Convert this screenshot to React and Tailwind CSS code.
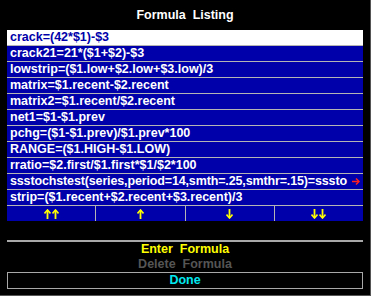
const formulas = [
  "crack=(42*$1)-$3",
  "crack21=21*($1+$2)-$3",
  "lowstrip=($1.low+$2.low+$3.low)/3",
  "matrix=$1.recent-$2.recent",
  "matrix2=$1.recent/$2.recent",
  "net1=$1-$1.prev",
  "pchg=($1-$1.prev)/$1.prev*100",
  "RANGE=($1.HIGH-$1.LOW)",
  "rratio=$2.first/$1.first*$1/$2*100",
  "ssstochstest(series,period=14,smth=.25,smthr=.15)=sssto",
  "strip=($1.recent+$2.recent+$3.recent)/3",
];

// one arrow glyph, pointing up or down
function Arrow({ down }) {
  return (
    <svg width="7" height="10" viewBox="0 0 7 10" className={down ? "rotate-180" : ""}>
      <path d="M0.5 4.5 L3.5 1 L6.5 4.5" fill="none" stroke="#ffff00" strokeWidth="1.6" />
      <line x1="3.5" y1="1.2" x2="3.5" y2="10" stroke="#ffff00" strokeWidth="1.8" />
    </svg>
  );
}

const moves = [
  { n: 2, down: false },
  { n: 1, down: false },
  { n: 1, down: true },
  { n: 2, down: true },
];

export default function App() {
  return (
    <div
      className="w-[371px] h-[296px] bg-black border-r border-b border-[#555555] flex flex-col font-bold text-[12.5px]"
      style={{ fontFamily: '"Liberation Sans", Arial, sans-serif' }}
    >
      <div className="h-[30px] flex items-center justify-center text-white whitespace-pre">
        Formula  Listing
      </div>

      <div className="ml-[7px] w-[356px] flex flex-col gap-px bg-[#b4b4b4]">
        {formulas.map((f, i) => {
          const long = f.startsWith("ssstoch");
          return (
            <div
              key={f}
              className={`h-[15px] leading-[15px] pl-[3px] flex items-center whitespace-nowrap ${
                i === 0 ? "bg-white text-[#0000aa]" : "bg-[#0000aa] text-white"
              }`}
            >
              <span className={`flex-1 min-w-0 overflow-hidden ${long ? "tracking-[-0.14px]" : ""}`}>{f}</span>
              {long && (
                <svg width="8" height="7" viewBox="0 0 8 7" className="shrink-0 mr-[3px]">
                  <line x1="0" y1="3.5" x2="7" y2="3.5" stroke="#ff2020" strokeWidth="1.5" />
                  <path d="M4 0.5 L7 3.5 L4 6.5" fill="none" stroke="#ff2020" strokeWidth="1.5" />
                </svg>
              )}
            </div>
          );
        })}
        <div className="h-[15px] grid grid-cols-4 gap-px">
          {moves.map((m, i) => (
            <div key={i} className="bg-[#0000aa] flex items-center justify-center gap-px">
              {Array.from({ length: m.n }).map((_, j) => (
                <Arrow key={j} down={m.down} />
              ))}
            </div>
          ))}
        </div>
      </div>

      <div className="h-[19px]" />
      <div className="ml-[7px] w-[356px] h-[2px] bg-[#a8a8a8]" />

      <div className="h-[15px] leading-[15px] text-center text-[#ffff00] whitespace-pre">
        Enter  Formula
      </div>
      <div className="h-[15px] leading-[15px] text-center text-[#555555] whitespace-pre">
        Delete  Formula
      </div>
      <div className="ml-[7px] w-[356px] h-[17px] border border-[#a8a8a8] flex items-center justify-center text-[#00e8f0]">
        Done
      </div>
    </div>
  );
}
